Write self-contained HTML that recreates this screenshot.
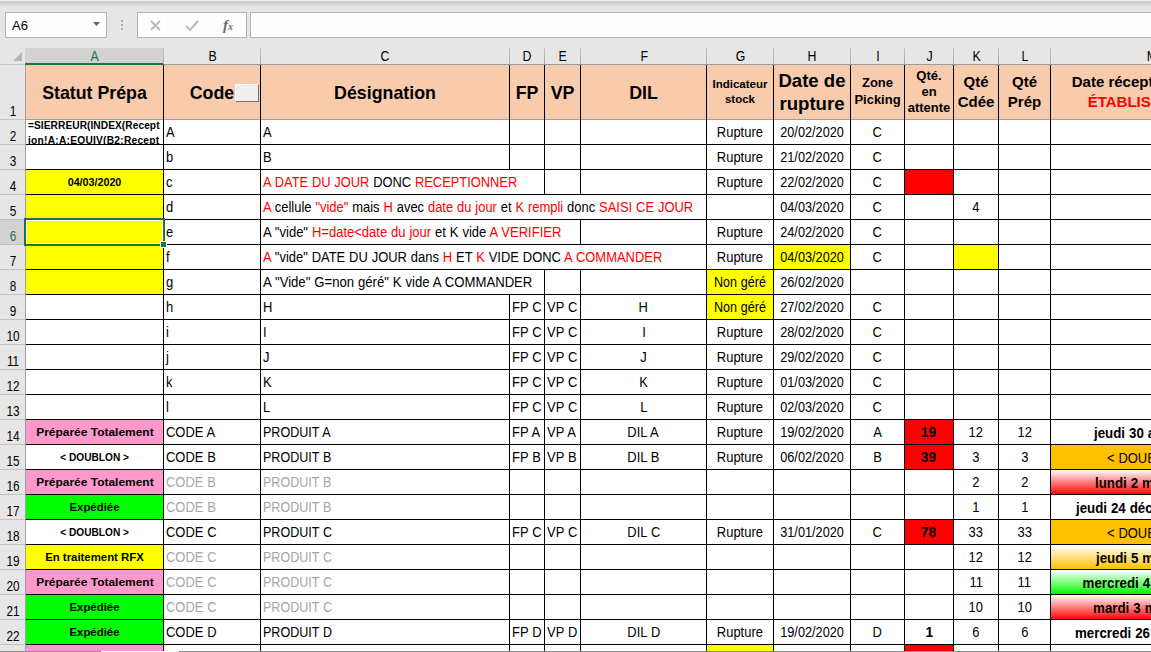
<!DOCTYPE html>
<html lang="fr"><head><meta charset="utf-8"><title>Classeur</title><style>
html,body{margin:0;padding:0;}
body{width:1151px;height:652px;overflow:hidden;background:#fff;position:relative;font-family:"Liberation Sans",sans-serif;color:#000;}
div{position:absolute;box-sizing:border-box;white-space:nowrap;}
.tb{left:0;top:0;width:1151px;height:64px;background:#e6e6e6;}
.strip{left:0;top:0;width:1151px;height:8px;background:linear-gradient(#f6f0f0 0,#f6f0f0 1px,#cecece 1px,#cecece 3px,#d6d6d6 3px,#d8d8d8 5px,#e0e0e0 5px,#e2e2e2 7px,#e6e6e6 8px);}
.box{background:#fefefe;border:1px solid #b4b4b4;top:12px;height:26px;}
.ch{top:47px;height:17px;font-size:14px;line-height:18px;text-align:center;color:#000;}
.vsep{top:48px;width:1px;height:16px;background:linear-gradient(#c4c4c4,#a8a8a8);}
.rh{left:0;width:25px;background:#e6e6e6;font-size:14px;text-align:center;border-bottom:1px solid #c2c4c2;}
.rh span{position:absolute;left:1px;right:0;bottom:-1px;line-height:17px;transform:scaleX(0.84);}
.c{overflow:hidden;font-size:14px;line-height:24px;}
.t{display:inline-block;transform:scaleX(0.925);word-spacing:0.3px;transform-origin:0 50%;}
.ctr .t{transform-origin:50% 50%;}
.hl{background:#000;height:1px;}
.vl{background:#000;width:1px;}
.ctr{text-align:center;}
.b{font-weight:bold;}
.r{color:#ff0000;}
.g{color:#a6a6a6;}
.hd{background:#f8cbad;font-weight:bold;text-align:center;display:flex;align-items:center;justify-content:center;white-space:normal;}
.st{font-size:11.4px;font-weight:bold;text-align:center;}
.st span{display:inline-block;}
</style></head><body>
<div class="tb" style=""></div>
<div class="strip" style=""></div>
<div class="box" style="left:5px;width:102px;font-size:13px;line-height:26px;padding-left:6px;">A6</div>
<svg style="position:absolute;left:93px;top:22px" width="8" height="5"><path d="M0 0h7l-3.5 4z" fill="#666"/></svg>
<svg style="position:absolute;left:121px;top:20px" width="3" height="12"><rect x="0" y="0" width="2" height="2" fill="#a8b4a4"/><rect x="0" y="4" width="2" height="2" fill="#a8b4a4"/><rect x="0" y="8" width="2" height="2" fill="#a8b4a4"/></svg>
<div class="box" style="left:137px;width:110px;"></div>
<svg style="position:absolute;left:150px;top:20px" width="12" height="12"><path d="M1 1l9 9M10 1l-9 9" stroke="#bababa" stroke-width="1.8" fill="none"/></svg>
<svg style="position:absolute;left:185px;top:20px" width="14" height="12"><path d="M1 6l4 4l8-9" stroke="#bababa" stroke-width="2.2" fill="none"/></svg>
<div class="" style="left:223px;top:15px;font-family:'Liberation Serif',serif;font-style:italic;font-weight:bold;font-size:15px;color:#6a6a6a;line-height:20px;">f<span style="font-size:10px">x</span></div>
<div class="box" style="left:250px;width:910px;"></div>
<div class="" style="left:0;top:47px;width:1151px;height:18px;background:#e6e6e6;"></div>
<div class="" style="left:25px;top:48px;width:139px;height:17px;background:#d2d2d2;border-bottom:2px solid #217346;"></div>
<svg style="position:absolute;left:13px;top:52px" width="9" height="9"><path d="M9 0v9h-9z" fill="#b4b4b4"/></svg>
<div class="ch" style="left:26px;width:138px;color:#217346;"><span style="display:inline-block;transform:scaleX(0.88)">A</span></div>
<div class="ch" style="left:164px;width:97px;color:#000;"><span style="display:inline-block;transform:scaleX(0.88)">B</span></div>
<div class="vsep" style="left:163px;"></div>
<div class="ch" style="left:261px;width:249px;color:#000;"><span style="display:inline-block;transform:scaleX(0.88)">C</span></div>
<div class="vsep" style="left:260px;"></div>
<div class="ch" style="left:510px;width:35px;color:#000;"><span style="display:inline-block;transform:scaleX(0.88)">D</span></div>
<div class="vsep" style="left:509px;"></div>
<div class="ch" style="left:545px;width:36px;color:#000;"><span style="display:inline-block;transform:scaleX(0.88)">E</span></div>
<div class="vsep" style="left:544px;"></div>
<div class="ch" style="left:581px;width:126px;color:#000;"><span style="display:inline-block;transform:scaleX(0.88)">F</span></div>
<div class="vsep" style="left:580px;"></div>
<div class="ch" style="left:707px;width:67px;color:#000;"><span style="display:inline-block;transform:scaleX(0.88)">G</span></div>
<div class="vsep" style="left:706px;"></div>
<div class="ch" style="left:774px;width:77px;color:#000;"><span style="display:inline-block;transform:scaleX(0.88)">H</span></div>
<div class="vsep" style="left:773px;"></div>
<div class="ch" style="left:851px;width:54px;color:#000;"><span style="display:inline-block;transform:scaleX(0.88)">I</span></div>
<div class="vsep" style="left:850px;"></div>
<div class="ch" style="left:905px;width:49px;color:#000;"><span style="display:inline-block;transform:scaleX(0.88)">J</span></div>
<div class="vsep" style="left:904px;"></div>
<div class="ch" style="left:954px;width:45px;color:#000;"><span style="display:inline-block;transform:scaleX(0.88)">K</span></div>
<div class="vsep" style="left:953px;"></div>
<div class="ch" style="left:999px;width:52px;color:#000;"><span style="display:inline-block;transform:scaleX(0.88)">L</span></div>
<div class="vsep" style="left:998px;"></div>
<div class="ch" style="left:1051px;width:202px;color:#000;"><span style="display:inline-block;transform:scaleX(0.88)">M</span></div>
<div class="vsep" style="left:1050px;"></div>
<div class="vsep" style="left:163px;"></div>
<div class="" style="left:164px;top:64px;width:990px;height:1px;background:#9c9c9c;"></div>
<div class="" style="left:0px;top:64px;width:25px;height:1px;background:#c8c8c8;"></div>
<div class="rh" style="top:65px;height:55px;"><span>1</span></div>
<div class="rh" style="top:120px;height:25px;"><span>2</span></div>
<div class="rh" style="top:145px;height:25px;"><span>3</span></div>
<div class="rh" style="top:170px;height:25px;"><span>4</span></div>
<div class="rh" style="top:195px;height:25px;"><span>5</span></div>
<div class="rh" style="top:220px;height:25px;background:#d2d2d2;color:#217346;"><span>6</span></div>
<div class="rh" style="top:245px;height:25px;"><span>7</span></div>
<div class="rh" style="top:270px;height:25px;"><span>8</span></div>
<div class="rh" style="top:295px;height:25px;"><span>9</span></div>
<div class="rh" style="top:320px;height:25px;"><span>10</span></div>
<div class="rh" style="top:345px;height:25px;"><span>11</span></div>
<div class="rh" style="top:370px;height:25px;"><span>12</span></div>
<div class="rh" style="top:395px;height:25px;"><span>13</span></div>
<div class="rh" style="top:420px;height:25px;"><span>14</span></div>
<div class="rh" style="top:445px;height:25px;"><span>15</span></div>
<div class="rh" style="top:470px;height:25px;"><span>16</span></div>
<div class="rh" style="top:495px;height:25px;"><span>17</span></div>
<div class="rh" style="top:520px;height:25px;"><span>18</span></div>
<div class="rh" style="top:545px;height:25px;"><span>19</span></div>
<div class="rh" style="top:570px;height:25px;"><span>20</span></div>
<div class="rh" style="top:595px;height:25px;"><span>21</span></div>
<div class="rh" style="top:620px;height:25px;"><span>22</span></div>
<div class="rh" style="top:645px;height:25px;"><span>23</span></div>
<div class="" style="left:25px;top:65px;width:1px;height:588px;background:#a0a0a0;"></div>
<div class="hd" style="left:26px;top:65px;width:137px;height:54px;font-size:17.8px;padding-top:2px;"><span>Statut Prépa</span></div>
<div class="hd" style="left:164px;top:65px;width:96px;height:54px;font-size:17.8px;padding-top:2px;"><span>Code</span></div>
<div class="hd" style="left:261px;top:65px;width:248px;height:54px;font-size:17.8px;padding-top:2px;"><span>Désignation</span></div>
<div class="hd" style="left:510px;top:65px;width:34px;height:54px;font-size:17.8px;padding-top:2px;"><span>FP</span></div>
<div class="hd" style="left:545px;top:65px;width:35px;height:54px;font-size:17.8px;padding-top:2px;"><span>VP</span></div>
<div class="hd" style="left:581px;top:65px;width:125px;height:54px;font-size:17.8px;padding-top:2px;"><span>DIL</span></div>
<div class="hd" style="left:707px;top:65px;width:66px;height:54px;font-size:11.5px;line-height:15px;"><span>Indicateur<br>stock</span></div>
<div class="hd" style="left:774px;top:65px;width:76px;height:54px;font-size:18.6px;line-height:23px;"><span>Date de<br>rupture</span></div>
<div class="hd" style="left:851px;top:65px;width:53px;height:54px;font-size:13px;line-height:17px;padding-bottom:2px;"><span>Zone<br>Picking</span></div>
<div class="hd" style="left:905px;top:65px;width:48px;height:54px;font-size:13px;line-height:16px;"><span>Qté.<br>en<br>attente</span></div>
<div class="hd" style="left:954px;top:65px;width:44px;height:54px;font-size:15px;line-height:20px;"><span>Qté<br>Cdée</span></div>
<div class="hd" style="left:999px;top:65px;width:51px;height:54px;font-size:15px;line-height:20px;"><span>Qté<br>Prép</span></div>
<div class="hd" style="left:1051px;top:65px;width:201px;height:54px;font-size:15px;line-height:20px;padding-right:2px;"><span>Date réception prévue<br><span class=r>ÉTABLISSEMENT</span></span></div>
<div class="" style="left:235px;top:84px;width:24px;height:18px;background:#efeff0;border:1px solid #fbfbfb;border-right-color:#8a6c68;border-bottom-color:#8a6c68;"></div>
<div class="c " style="left:26px;top:120px;width:137px;height:24px;font-size:10.2px;font-weight:bold;"><span style="position:absolute;left:2px;top:-2px;line-height:15px;white-space:normal;width:134px;word-break:break-all"><span style="letter-spacing:0.05px">=SIERREUR(INDEX(Recept</span><br><span style="letter-spacing:0.25px">ion!A:A;EQUIV(B2;Recept</span><br>ion</span></div>
<div class="c st" style="left:26px;top:170px;width:137px;height:24px;background:#ffff00;"><span style="transform:scaleX(0.94)">04/03/2020</span></div>
<div class="c " style="left:26px;top:195px;width:137px;height:24px;background:#ffff00;"></div>
<div class="c " style="left:26px;top:220px;width:137px;height:24px;background:#ffff00;"></div>
<div class="c " style="left:26px;top:245px;width:137px;height:24px;background:#ffff00;"></div>
<div class="c " style="left:26px;top:270px;width:137px;height:24px;background:#ffff00;"></div>
<div class="c st" style="left:26px;top:420px;width:137px;height:24px;background:#ff99cc;"><span style="transform:scaleX(1.05)">Préparée Totalement</span></div>
<div class="c st" style="left:26px;top:445px;width:137px;height:24px;"><span style="transform:scaleX(0.89)">&lt; DOUBLON &gt;</span></div>
<div class="c st" style="left:26px;top:470px;width:137px;height:24px;background:#ff99cc;"><span style="transform:scaleX(1.05)">Préparée Totalement</span></div>
<div class="c st" style="left:26px;top:495px;width:137px;height:24px;background:#00ff00;"><span style="transform:scaleX(1.0)">Expédiée</span></div>
<div class="c st" style="left:26px;top:520px;width:137px;height:24px;"><span style="transform:scaleX(0.89)">&lt; DOUBLON &gt;</span></div>
<div class="c st" style="left:26px;top:545px;width:137px;height:24px;background:#ffff00;"><span style="transform:scaleX(1.0)">En traitement RFX</span></div>
<div class="c st" style="left:26px;top:570px;width:137px;height:24px;background:#ff99cc;"><span style="transform:scaleX(1.05)">Préparée Totalement</span></div>
<div class="c st" style="left:26px;top:595px;width:137px;height:24px;background:#00ff00;"><span style="transform:scaleX(1.0)">Expédiée</span></div>
<div class="c st" style="left:26px;top:620px;width:137px;height:24px;background:#00ff00;"><span style="transform:scaleX(1.0)">Expédiée</span></div>
<div class="c st" style="left:26px;top:645px;width:137px;height:24px;background:#ff99cc;"></div>
<div class="c " style="left:164px;top:120px;width:96px;height:24px;padding-left:2px;"><span class="t">A</span></div>
<div class="c " style="left:164px;top:145px;width:96px;height:24px;padding-left:2px;"><span class="t">b</span></div>
<div class="c " style="left:164px;top:170px;width:96px;height:24px;padding-left:2px;"><span class="t">c</span></div>
<div class="c " style="left:164px;top:195px;width:96px;height:24px;padding-left:2px;"><span class="t">d</span></div>
<div class="c " style="left:164px;top:220px;width:96px;height:24px;padding-left:2px;"><span class="t">e</span></div>
<div class="c " style="left:164px;top:245px;width:96px;height:24px;padding-left:2px;"><span class="t">f</span></div>
<div class="c " style="left:164px;top:270px;width:96px;height:24px;padding-left:2px;"><span class="t">g</span></div>
<div class="c " style="left:164px;top:295px;width:96px;height:24px;padding-left:2px;"><span class="t">h</span></div>
<div class="c " style="left:164px;top:320px;width:96px;height:24px;padding-left:2px;"><span class="t">i</span></div>
<div class="c " style="left:164px;top:345px;width:96px;height:24px;padding-left:2px;"><span class="t">j</span></div>
<div class="c " style="left:164px;top:370px;width:96px;height:24px;padding-left:2px;"><span class="t">k</span></div>
<div class="c " style="left:164px;top:395px;width:96px;height:24px;padding-left:2px;"><span class="t">l</span></div>
<div class="c " style="left:261px;top:120px;width:248px;height:24px;padding-left:2px;"><span class="t">A</span></div>
<div class="c " style="left:261px;top:145px;width:248px;height:24px;padding-left:2px;"><span class="t">B</span></div>
<div class="c " style="left:261px;top:295px;width:248px;height:24px;padding-left:2px;"><span class="t">H</span></div>
<div class="c " style="left:261px;top:320px;width:248px;height:24px;padding-left:2px;"><span class="t">I</span></div>
<div class="c " style="left:261px;top:345px;width:248px;height:24px;padding-left:2px;"><span class="t">J</span></div>
<div class="c " style="left:261px;top:370px;width:248px;height:24px;padding-left:2px;"><span class="t">K</span></div>
<div class="c " style="left:261px;top:395px;width:248px;height:24px;padding-left:2px;"><span class="t">L</span></div>
<div class="c " style="left:261px;top:170px;width:283px;height:24px;padding-left:2px;"><span class="t" style="transform:scaleX(0.919)"><span class=r>A DATE DU JOUR</span> DONC <span class=r>RECEPTIONNER</span></span></div>
<div class="c " style="left:261px;top:195px;width:445px;height:24px;padding-left:2px;"><span class="t"><span class=r>A</span> cellule <span class=r>"vide"</span> mais <span class=r>H</span> avec <span class=r>date du jour</span> et <span class=r>K rempli</span> donc <span class=r>SAISI CE JOUR</span></span></div>
<div class="c " style="left:261px;top:220px;width:319px;height:24px;padding-left:2px;"><span class="t" style="transform:scaleX(0.93)">A "vide" <span class=r>H=date&lt;date du jour</span> et K vide <span class=r>A VERIFIER</span></span></div>
<div class="c " style="left:261px;top:245px;width:445px;height:24px;padding-left:2px;"><span class="t"><span class=r>A</span> "vide" DATE DU JOUR dans <span class=r>H</span> ET <span class=r>K</span> VIDE DONC <span class=r>A COMMANDER</span></span></div>
<div class="c " style="left:261px;top:270px;width:283px;height:24px;padding-left:2px;"><span class="t" style="transform:scaleX(0.938)">A "Vide" G=non géré" K vide A COMMANDER</span></div>
<div class="c " style="left:164px;top:420px;width:96px;height:24px;padding-left:2px;"><span class="t">CODE A</span></div>
<div class="c " style="left:261px;top:420px;width:248px;height:24px;padding-left:2px;"><span class="t" style="transform:scaleX(0.895)">PRODUIT A</span></div>
<div class="c " style="left:164px;top:445px;width:96px;height:24px;padding-left:2px;"><span class="t">CODE B</span></div>
<div class="c " style="left:261px;top:445px;width:248px;height:24px;padding-left:2px;"><span class="t" style="transform:scaleX(0.895)">PRODUIT B</span></div>
<div class="c g" style="left:164px;top:470px;width:96px;height:24px;padding-left:2px;"><span class="t">CODE B</span></div>
<div class="c g" style="left:261px;top:470px;width:248px;height:24px;padding-left:2px;"><span class="t" style="transform:scaleX(0.895)">PRODUIT B</span></div>
<div class="c g" style="left:164px;top:495px;width:96px;height:24px;padding-left:2px;"><span class="t">CODE B</span></div>
<div class="c g" style="left:261px;top:495px;width:248px;height:24px;padding-left:2px;"><span class="t" style="transform:scaleX(0.895)">PRODUIT B</span></div>
<div class="c " style="left:164px;top:520px;width:96px;height:24px;padding-left:2px;"><span class="t">CODE C</span></div>
<div class="c " style="left:261px;top:520px;width:248px;height:24px;padding-left:2px;"><span class="t" style="transform:scaleX(0.895)">PRODUIT C</span></div>
<div class="c g" style="left:164px;top:545px;width:96px;height:24px;padding-left:2px;"><span class="t">CODE C</span></div>
<div class="c g" style="left:261px;top:545px;width:248px;height:24px;padding-left:2px;"><span class="t" style="transform:scaleX(0.895)">PRODUIT C</span></div>
<div class="c g" style="left:164px;top:570px;width:96px;height:24px;padding-left:2px;"><span class="t">CODE C</span></div>
<div class="c g" style="left:261px;top:570px;width:248px;height:24px;padding-left:2px;"><span class="t" style="transform:scaleX(0.895)">PRODUIT C</span></div>
<div class="c g" style="left:164px;top:595px;width:96px;height:24px;padding-left:2px;"><span class="t">CODE C</span></div>
<div class="c g" style="left:261px;top:595px;width:248px;height:24px;padding-left:2px;"><span class="t" style="transform:scaleX(0.895)">PRODUIT C</span></div>
<div class="c " style="left:164px;top:620px;width:96px;height:24px;padding-left:2px;"><span class="t">CODE D</span></div>
<div class="c " style="left:261px;top:620px;width:248px;height:24px;padding-left:2px;"><span class="t" style="transform:scaleX(0.895)">PRODUIT D</span></div>
<div class="c " style="left:510px;top:295px;width:34px;height:24px;padding-left:2px;"><span class="t">FP C</span></div>
<div class="c " style="left:545px;top:295px;width:35px;height:24px;padding-left:2px;"><span class="t">VP C</span></div>
<div class="c ctr" style="left:581px;top:295px;width:125px;height:24px;"><span class="t">H</span></div>
<div class="c " style="left:510px;top:320px;width:34px;height:24px;padding-left:2px;"><span class="t">FP C</span></div>
<div class="c " style="left:545px;top:320px;width:35px;height:24px;padding-left:2px;"><span class="t">VP C</span></div>
<div class="c ctr" style="left:581px;top:320px;width:125px;height:24px;"><span class="t">I</span></div>
<div class="c " style="left:510px;top:345px;width:34px;height:24px;padding-left:2px;"><span class="t">FP C</span></div>
<div class="c " style="left:545px;top:345px;width:35px;height:24px;padding-left:2px;"><span class="t">VP C</span></div>
<div class="c ctr" style="left:581px;top:345px;width:125px;height:24px;"><span class="t">J</span></div>
<div class="c " style="left:510px;top:370px;width:34px;height:24px;padding-left:2px;"><span class="t">FP C</span></div>
<div class="c " style="left:545px;top:370px;width:35px;height:24px;padding-left:2px;"><span class="t">VP C</span></div>
<div class="c ctr" style="left:581px;top:370px;width:125px;height:24px;"><span class="t">K</span></div>
<div class="c " style="left:510px;top:395px;width:34px;height:24px;padding-left:2px;"><span class="t">FP C</span></div>
<div class="c " style="left:545px;top:395px;width:35px;height:24px;padding-left:2px;"><span class="t">VP C</span></div>
<div class="c ctr" style="left:581px;top:395px;width:125px;height:24px;"><span class="t">L</span></div>
<div class="c " style="left:510px;top:420px;width:34px;height:24px;padding-left:2px;"><span class="t">FP A</span></div>
<div class="c " style="left:545px;top:420px;width:35px;height:24px;padding-left:2px;"><span class="t">VP A</span></div>
<div class="c ctr" style="left:581px;top:420px;width:125px;height:24px;"><span class="t">DIL A</span></div>
<div class="c " style="left:510px;top:445px;width:34px;height:24px;padding-left:2px;"><span class="t">FP B</span></div>
<div class="c " style="left:545px;top:445px;width:35px;height:24px;padding-left:2px;"><span class="t">VP B</span></div>
<div class="c ctr" style="left:581px;top:445px;width:125px;height:24px;"><span class="t">DIL B</span></div>
<div class="c " style="left:510px;top:520px;width:34px;height:24px;padding-left:2px;"><span class="t">FP C</span></div>
<div class="c " style="left:545px;top:520px;width:35px;height:24px;padding-left:2px;"><span class="t">VP C</span></div>
<div class="c ctr" style="left:581px;top:520px;width:125px;height:24px;"><span class="t">DIL C</span></div>
<div class="c " style="left:510px;top:620px;width:34px;height:24px;padding-left:2px;"><span class="t">FP D</span></div>
<div class="c " style="left:545px;top:620px;width:35px;height:24px;padding-left:2px;"><span class="t">VP D</span></div>
<div class="c ctr" style="left:581px;top:620px;width:125px;height:24px;"><span class="t">DIL D</span></div>
<div class="c ctr" style="left:707px;top:120px;width:66px;height:24px;"><span class="t">Rupture</span></div>
<div class="c ctr" style="left:707px;top:145px;width:66px;height:24px;"><span class="t">Rupture</span></div>
<div class="c ctr" style="left:707px;top:170px;width:66px;height:24px;"><span class="t">Rupture</span></div>
<div class="c ctr" style="left:707px;top:220px;width:66px;height:24px;"><span class="t">Rupture</span></div>
<div class="c ctr" style="left:707px;top:245px;width:66px;height:24px;"><span class="t">Rupture</span></div>
<div class="c ctr" style="left:707px;top:320px;width:66px;height:24px;"><span class="t">Rupture</span></div>
<div class="c ctr" style="left:707px;top:345px;width:66px;height:24px;"><span class="t">Rupture</span></div>
<div class="c ctr" style="left:707px;top:370px;width:66px;height:24px;"><span class="t">Rupture</span></div>
<div class="c ctr" style="left:707px;top:395px;width:66px;height:24px;"><span class="t">Rupture</span></div>
<div class="c ctr" style="left:707px;top:420px;width:66px;height:24px;"><span class="t">Rupture</span></div>
<div class="c ctr" style="left:707px;top:445px;width:66px;height:24px;"><span class="t">Rupture</span></div>
<div class="c ctr" style="left:707px;top:520px;width:66px;height:24px;"><span class="t">Rupture</span></div>
<div class="c ctr" style="left:707px;top:620px;width:66px;height:24px;"><span class="t">Rupture</span></div>
<div class="c ctr" style="left:707px;top:270px;width:66px;height:24px;background:#ffff00;"><span class="t" style="transform:scaleX(0.895)">Non géré</span></div>
<div class="c ctr" style="left:707px;top:295px;width:66px;height:24px;background:#ffff00;"><span class="t" style="transform:scaleX(0.895)">Non géré</span></div>
<div class="c " style="left:707px;top:645px;width:66px;height:24px;background:#ffff00;"></div>
<div class="c ctr" style="left:774px;top:120px;width:76px;height:24px;"><span class="t" style="transform:scaleX(0.908)">20/02/2020</span></div>
<div class="c ctr" style="left:774px;top:145px;width:76px;height:24px;"><span class="t" style="transform:scaleX(0.908)">21/02/2020</span></div>
<div class="c ctr" style="left:774px;top:170px;width:76px;height:24px;"><span class="t" style="transform:scaleX(0.908)">22/02/2020</span></div>
<div class="c ctr" style="left:774px;top:195px;width:76px;height:24px;"><span class="t" style="transform:scaleX(0.908)">04/03/2020</span></div>
<div class="c ctr" style="left:774px;top:220px;width:76px;height:24px;"><span class="t" style="transform:scaleX(0.908)">24/02/2020</span></div>
<div class="c ctr" style="left:774px;top:245px;width:76px;height:24px;background:#ffff00;"><span class="t" style="transform:scaleX(0.908)">04/03/2020</span></div>
<div class="c ctr" style="left:774px;top:270px;width:76px;height:24px;"><span class="t" style="transform:scaleX(0.908)">26/02/2020</span></div>
<div class="c ctr" style="left:774px;top:295px;width:76px;height:24px;"><span class="t" style="transform:scaleX(0.908)">27/02/2020</span></div>
<div class="c ctr" style="left:774px;top:320px;width:76px;height:24px;"><span class="t" style="transform:scaleX(0.908)">28/02/2020</span></div>
<div class="c ctr" style="left:774px;top:345px;width:76px;height:24px;"><span class="t" style="transform:scaleX(0.908)">29/02/2020</span></div>
<div class="c ctr" style="left:774px;top:370px;width:76px;height:24px;"><span class="t" style="transform:scaleX(0.908)">01/03/2020</span></div>
<div class="c ctr" style="left:774px;top:395px;width:76px;height:24px;"><span class="t" style="transform:scaleX(0.908)">02/03/2020</span></div>
<div class="c ctr" style="left:774px;top:420px;width:76px;height:24px;"><span class="t" style="transform:scaleX(0.908)">19/02/2020</span></div>
<div class="c ctr" style="left:774px;top:445px;width:76px;height:24px;"><span class="t" style="transform:scaleX(0.908)">06/02/2020</span></div>
<div class="c ctr" style="left:774px;top:520px;width:76px;height:24px;"><span class="t" style="transform:scaleX(0.908)">31/01/2020</span></div>
<div class="c ctr" style="left:774px;top:620px;width:76px;height:24px;"><span class="t" style="transform:scaleX(0.908)">19/02/2020</span></div>
<div class="c ctr" style="left:851px;top:120px;width:53px;height:24px;"><span class="t">C</span></div>
<div class="c ctr" style="left:851px;top:145px;width:53px;height:24px;"><span class="t">C</span></div>
<div class="c ctr" style="left:851px;top:170px;width:53px;height:24px;"><span class="t">C</span></div>
<div class="c ctr" style="left:851px;top:195px;width:53px;height:24px;"><span class="t">C</span></div>
<div class="c ctr" style="left:851px;top:220px;width:53px;height:24px;"><span class="t">C</span></div>
<div class="c ctr" style="left:851px;top:245px;width:53px;height:24px;"><span class="t">C</span></div>
<div class="c ctr" style="left:851px;top:295px;width:53px;height:24px;"><span class="t">C</span></div>
<div class="c ctr" style="left:851px;top:320px;width:53px;height:24px;"><span class="t">C</span></div>
<div class="c ctr" style="left:851px;top:345px;width:53px;height:24px;"><span class="t">C</span></div>
<div class="c ctr" style="left:851px;top:370px;width:53px;height:24px;"><span class="t">C</span></div>
<div class="c ctr" style="left:851px;top:395px;width:53px;height:24px;"><span class="t">C</span></div>
<div class="c ctr" style="left:851px;top:520px;width:53px;height:24px;"><span class="t">C</span></div>
<div class="c ctr" style="left:851px;top:420px;width:53px;height:24px;"><span class="t">A</span></div>
<div class="c ctr" style="left:851px;top:445px;width:53px;height:24px;"><span class="t">B</span></div>
<div class="c ctr" style="left:851px;top:620px;width:53px;height:24px;"><span class="t">D</span></div>
<div class="c " style="left:905px;top:170px;width:48px;height:24px;background:#ff0000;"></div>
<div class="c ctr b" style="left:905px;top:420px;width:48px;height:24px;background:#ff0000;font-size:15.4px;line-height:23px;"><span class="t" style="transform:scaleX(0.9)">19</span></div>
<div class="c ctr b" style="left:905px;top:445px;width:48px;height:24px;background:#ff0000;font-size:15.4px;line-height:23px;"><span class="t" style="transform:scaleX(0.9)">39</span></div>
<div class="c ctr b" style="left:905px;top:520px;width:48px;height:24px;background:#ff0000;font-size:15.4px;line-height:23px;"><span class="t" style="transform:scaleX(0.9)">78</span></div>
<div class="c ctr b" style="left:905px;top:620px;width:48px;height:24px;font-size:15.4px;line-height:23px;"><span class="t" style="transform:scaleX(0.9)">1</span></div>
<div class="c " style="left:905px;top:645px;width:48px;height:24px;background:#ff0000;"></div>
<div class="c ctr" style="left:954px;top:195px;width:44px;height:24px;"><span class="t">4</span></div>
<div class="c " style="left:954px;top:245px;width:44px;height:24px;background:#ffff00;"></div>
<div class="c ctr" style="left:954px;top:420px;width:44px;height:24px;"><span class="t">12</span></div>
<div class="c ctr" style="left:999px;top:420px;width:51px;height:24px;"><span class="t">12</span></div>
<div class="c ctr" style="left:954px;top:445px;width:44px;height:24px;"><span class="t">3</span></div>
<div class="c ctr" style="left:999px;top:445px;width:51px;height:24px;"><span class="t">3</span></div>
<div class="c ctr" style="left:954px;top:470px;width:44px;height:24px;"><span class="t">2</span></div>
<div class="c ctr" style="left:999px;top:470px;width:51px;height:24px;"><span class="t">2</span></div>
<div class="c ctr" style="left:954px;top:495px;width:44px;height:24px;"><span class="t">1</span></div>
<div class="c ctr" style="left:999px;top:495px;width:51px;height:24px;"><span class="t">1</span></div>
<div class="c ctr" style="left:954px;top:520px;width:44px;height:24px;"><span class="t">33</span></div>
<div class="c ctr" style="left:999px;top:520px;width:51px;height:24px;"><span class="t">33</span></div>
<div class="c ctr" style="left:954px;top:545px;width:44px;height:24px;"><span class="t">12</span></div>
<div class="c ctr" style="left:999px;top:545px;width:51px;height:24px;"><span class="t">12</span></div>
<div class="c ctr" style="left:954px;top:570px;width:44px;height:24px;"><span class="t">11</span></div>
<div class="c ctr" style="left:999px;top:570px;width:51px;height:24px;"><span class="t">11</span></div>
<div class="c ctr" style="left:954px;top:595px;width:44px;height:24px;"><span class="t">10</span></div>
<div class="c ctr" style="left:999px;top:595px;width:51px;height:24px;"><span class="t">10</span></div>
<div class="c ctr" style="left:954px;top:620px;width:44px;height:24px;"><span class="t">6</span></div>
<div class="c ctr" style="left:999px;top:620px;width:51px;height:24px;"><span class="t">6</span></div>
<div class="c ctr b" style="left:1051px;top:420px;width:201px;height:24px;line-height:26px;"><span class="t" style="transform:scaleX(0.95)">jeudi 30 avril 2020</span></div>
<div class="c " style="left:1051px;top:445px;width:201px;height:24px;background:#ffc000;padding-left:56px;line-height:26px;"><span class="t" style="transform-origin:0 50%">&lt; DOUBLON &gt;</span></div>
<div class="c ctr b" style="left:1051px;top:470px;width:201px;height:24px;background:linear-gradient(#ffffff 0%,#ff8080 50%,#ff0808 100%);line-height:26px;"><span class="t" style="transform:scaleX(0.95)">lundi 2 mars 2020</span></div>
<div class="c ctr b" style="left:1051px;top:495px;width:201px;height:24px;line-height:26px;"><span class="t" style="transform:scaleX(0.95)">jeudi 24 décembre 2020</span></div>
<div class="c " style="left:1051px;top:520px;width:201px;height:24px;background:#ffc000;padding-left:56px;line-height:26px;"><span class="t" style="transform-origin:0 50%">&lt; DOUBLON &gt;</span></div>
<div class="c ctr b" style="left:1051px;top:545px;width:201px;height:24px;background:linear-gradient(#ffffff 0%,#ffe080 50%,#ffc000 100%);line-height:26px;"><span class="t" style="transform:scaleX(0.95)">jeudi 5 mars 2020</span></div>
<div class="c ctr b" style="left:1051px;top:570px;width:201px;height:24px;background:linear-gradient(#ffffff 0%,#80ff80 50%,#00f800 100%);line-height:26px;"><span class="t" style="transform:scaleX(0.95)">mercredi 4 mars 2020</span></div>
<div class="c ctr b" style="left:1051px;top:595px;width:201px;height:24px;background:linear-gradient(#ffffff 0%,#ff8080 50%,#ff0808 100%);line-height:26px;"><span class="t" style="transform:scaleX(0.95)">mardi 3 mars 2020</span></div>
<div class="c ctr b" style="left:1051px;top:620px;width:201px;height:24px;line-height:26px;"><span class="t" style="transform:scaleX(0.95)">mercredi 26 février 2020</span></div>
<div class="hl" style="left:26px;top:119px;width:1130px;background:#9e9e9e;"></div>
<div class="hl" style="left:26px;top:144px;width:1130px;"></div>
<div class="hl" style="left:26px;top:169px;width:1130px;"></div>
<div class="hl" style="left:26px;top:194px;width:1130px;"></div>
<div class="hl" style="left:26px;top:219px;width:1130px;"></div>
<div class="hl" style="left:26px;top:244px;width:1130px;"></div>
<div class="hl" style="left:26px;top:269px;width:1130px;"></div>
<div class="hl" style="left:26px;top:294px;width:1130px;"></div>
<div class="hl" style="left:26px;top:319px;width:1130px;"></div>
<div class="hl" style="left:26px;top:344px;width:1130px;"></div>
<div class="hl" style="left:26px;top:369px;width:1130px;"></div>
<div class="hl" style="left:26px;top:394px;width:1130px;"></div>
<div class="hl" style="left:26px;top:419px;width:1130px;"></div>
<div class="hl" style="left:26px;top:444px;width:1130px;"></div>
<div class="hl" style="left:26px;top:469px;width:1130px;"></div>
<div class="hl" style="left:26px;top:494px;width:1130px;"></div>
<div class="hl" style="left:26px;top:519px;width:1130px;"></div>
<div class="hl" style="left:26px;top:544px;width:1130px;"></div>
<div class="hl" style="left:26px;top:569px;width:1130px;"></div>
<div class="hl" style="left:26px;top:594px;width:1130px;"></div>
<div class="hl" style="left:26px;top:619px;width:1130px;"></div>
<div class="hl" style="left:26px;top:644px;width:1130px;"></div>
<div class="hl" style="left:26px;top:669px;width:1130px;"></div>
<div class="vl" style="left:163px;top:65px;height:55px;"></div>
<div class="vl" style="left:260px;top:65px;height:55px;"></div>
<div class="vl" style="left:509px;top:65px;height:55px;"></div>
<div class="vl" style="left:544px;top:65px;height:55px;"></div>
<div class="vl" style="left:580px;top:65px;height:55px;"></div>
<div class="vl" style="left:706px;top:65px;height:55px;"></div>
<div class="vl" style="left:773px;top:65px;height:55px;"></div>
<div class="vl" style="left:850px;top:65px;height:55px;"></div>
<div class="vl" style="left:904px;top:65px;height:55px;"></div>
<div class="vl" style="left:953px;top:65px;height:55px;"></div>
<div class="vl" style="left:998px;top:65px;height:55px;"></div>
<div class="vl" style="left:1050px;top:65px;height:55px;"></div>
<div class="vl" style="left:163px;top:119px;height:26px;"></div>
<div class="vl" style="left:260px;top:119px;height:26px;"></div>
<div class="vl" style="left:509px;top:119px;height:26px;"></div>
<div class="vl" style="left:544px;top:119px;height:26px;"></div>
<div class="vl" style="left:580px;top:119px;height:26px;"></div>
<div class="vl" style="left:706px;top:119px;height:26px;"></div>
<div class="vl" style="left:773px;top:119px;height:26px;"></div>
<div class="vl" style="left:850px;top:119px;height:26px;"></div>
<div class="vl" style="left:904px;top:119px;height:26px;"></div>
<div class="vl" style="left:953px;top:119px;height:26px;"></div>
<div class="vl" style="left:998px;top:119px;height:26px;"></div>
<div class="vl" style="left:1050px;top:119px;height:26px;"></div>
<div class="vl" style="left:163px;top:144px;height:26px;"></div>
<div class="vl" style="left:260px;top:144px;height:26px;"></div>
<div class="vl" style="left:509px;top:144px;height:26px;"></div>
<div class="vl" style="left:544px;top:144px;height:26px;"></div>
<div class="vl" style="left:580px;top:144px;height:26px;"></div>
<div class="vl" style="left:706px;top:144px;height:26px;"></div>
<div class="vl" style="left:773px;top:144px;height:26px;"></div>
<div class="vl" style="left:850px;top:144px;height:26px;"></div>
<div class="vl" style="left:904px;top:144px;height:26px;"></div>
<div class="vl" style="left:953px;top:144px;height:26px;"></div>
<div class="vl" style="left:998px;top:144px;height:26px;"></div>
<div class="vl" style="left:1050px;top:144px;height:26px;"></div>
<div class="vl" style="left:163px;top:169px;height:26px;"></div>
<div class="vl" style="left:260px;top:169px;height:26px;"></div>
<div class="vl" style="left:544px;top:169px;height:26px;"></div>
<div class="vl" style="left:580px;top:169px;height:26px;"></div>
<div class="vl" style="left:706px;top:169px;height:26px;"></div>
<div class="vl" style="left:773px;top:169px;height:26px;"></div>
<div class="vl" style="left:850px;top:169px;height:26px;"></div>
<div class="vl" style="left:904px;top:169px;height:26px;"></div>
<div class="vl" style="left:953px;top:169px;height:26px;"></div>
<div class="vl" style="left:998px;top:169px;height:26px;"></div>
<div class="vl" style="left:1050px;top:169px;height:26px;"></div>
<div class="vl" style="left:163px;top:194px;height:26px;"></div>
<div class="vl" style="left:260px;top:194px;height:26px;"></div>
<div class="vl" style="left:706px;top:194px;height:26px;"></div>
<div class="vl" style="left:773px;top:194px;height:26px;"></div>
<div class="vl" style="left:850px;top:194px;height:26px;"></div>
<div class="vl" style="left:904px;top:194px;height:26px;"></div>
<div class="vl" style="left:953px;top:194px;height:26px;"></div>
<div class="vl" style="left:998px;top:194px;height:26px;"></div>
<div class="vl" style="left:1050px;top:194px;height:26px;"></div>
<div class="vl" style="left:163px;top:219px;height:26px;"></div>
<div class="vl" style="left:260px;top:219px;height:26px;"></div>
<div class="vl" style="left:580px;top:219px;height:26px;"></div>
<div class="vl" style="left:706px;top:219px;height:26px;"></div>
<div class="vl" style="left:773px;top:219px;height:26px;"></div>
<div class="vl" style="left:850px;top:219px;height:26px;"></div>
<div class="vl" style="left:904px;top:219px;height:26px;"></div>
<div class="vl" style="left:953px;top:219px;height:26px;"></div>
<div class="vl" style="left:998px;top:219px;height:26px;"></div>
<div class="vl" style="left:1050px;top:219px;height:26px;"></div>
<div class="vl" style="left:163px;top:244px;height:26px;"></div>
<div class="vl" style="left:260px;top:244px;height:26px;"></div>
<div class="vl" style="left:706px;top:244px;height:26px;"></div>
<div class="vl" style="left:773px;top:244px;height:26px;"></div>
<div class="vl" style="left:850px;top:244px;height:26px;"></div>
<div class="vl" style="left:904px;top:244px;height:26px;"></div>
<div class="vl" style="left:953px;top:244px;height:26px;"></div>
<div class="vl" style="left:998px;top:244px;height:26px;"></div>
<div class="vl" style="left:1050px;top:244px;height:26px;"></div>
<div class="vl" style="left:163px;top:269px;height:26px;"></div>
<div class="vl" style="left:260px;top:269px;height:26px;"></div>
<div class="vl" style="left:544px;top:269px;height:26px;"></div>
<div class="vl" style="left:580px;top:269px;height:26px;"></div>
<div class="vl" style="left:706px;top:269px;height:26px;"></div>
<div class="vl" style="left:773px;top:269px;height:26px;"></div>
<div class="vl" style="left:850px;top:269px;height:26px;"></div>
<div class="vl" style="left:904px;top:269px;height:26px;"></div>
<div class="vl" style="left:953px;top:269px;height:26px;"></div>
<div class="vl" style="left:998px;top:269px;height:26px;"></div>
<div class="vl" style="left:1050px;top:269px;height:26px;"></div>
<div class="vl" style="left:163px;top:294px;height:26px;"></div>
<div class="vl" style="left:260px;top:294px;height:26px;"></div>
<div class="vl" style="left:509px;top:294px;height:26px;"></div>
<div class="vl" style="left:544px;top:294px;height:26px;"></div>
<div class="vl" style="left:580px;top:294px;height:26px;"></div>
<div class="vl" style="left:706px;top:294px;height:26px;"></div>
<div class="vl" style="left:773px;top:294px;height:26px;"></div>
<div class="vl" style="left:850px;top:294px;height:26px;"></div>
<div class="vl" style="left:904px;top:294px;height:26px;"></div>
<div class="vl" style="left:953px;top:294px;height:26px;"></div>
<div class="vl" style="left:998px;top:294px;height:26px;"></div>
<div class="vl" style="left:1050px;top:294px;height:26px;"></div>
<div class="vl" style="left:163px;top:319px;height:26px;"></div>
<div class="vl" style="left:260px;top:319px;height:26px;"></div>
<div class="vl" style="left:509px;top:319px;height:26px;"></div>
<div class="vl" style="left:544px;top:319px;height:26px;"></div>
<div class="vl" style="left:580px;top:319px;height:26px;"></div>
<div class="vl" style="left:706px;top:319px;height:26px;"></div>
<div class="vl" style="left:773px;top:319px;height:26px;"></div>
<div class="vl" style="left:850px;top:319px;height:26px;"></div>
<div class="vl" style="left:904px;top:319px;height:26px;"></div>
<div class="vl" style="left:953px;top:319px;height:26px;"></div>
<div class="vl" style="left:998px;top:319px;height:26px;"></div>
<div class="vl" style="left:1050px;top:319px;height:26px;"></div>
<div class="vl" style="left:163px;top:344px;height:26px;"></div>
<div class="vl" style="left:260px;top:344px;height:26px;"></div>
<div class="vl" style="left:509px;top:344px;height:26px;"></div>
<div class="vl" style="left:544px;top:344px;height:26px;"></div>
<div class="vl" style="left:580px;top:344px;height:26px;"></div>
<div class="vl" style="left:706px;top:344px;height:26px;"></div>
<div class="vl" style="left:773px;top:344px;height:26px;"></div>
<div class="vl" style="left:850px;top:344px;height:26px;"></div>
<div class="vl" style="left:904px;top:344px;height:26px;"></div>
<div class="vl" style="left:953px;top:344px;height:26px;"></div>
<div class="vl" style="left:998px;top:344px;height:26px;"></div>
<div class="vl" style="left:1050px;top:344px;height:26px;"></div>
<div class="vl" style="left:163px;top:369px;height:26px;"></div>
<div class="vl" style="left:260px;top:369px;height:26px;"></div>
<div class="vl" style="left:509px;top:369px;height:26px;"></div>
<div class="vl" style="left:544px;top:369px;height:26px;"></div>
<div class="vl" style="left:580px;top:369px;height:26px;"></div>
<div class="vl" style="left:706px;top:369px;height:26px;"></div>
<div class="vl" style="left:773px;top:369px;height:26px;"></div>
<div class="vl" style="left:850px;top:369px;height:26px;"></div>
<div class="vl" style="left:904px;top:369px;height:26px;"></div>
<div class="vl" style="left:953px;top:369px;height:26px;"></div>
<div class="vl" style="left:998px;top:369px;height:26px;"></div>
<div class="vl" style="left:1050px;top:369px;height:26px;"></div>
<div class="vl" style="left:163px;top:394px;height:26px;"></div>
<div class="vl" style="left:260px;top:394px;height:26px;"></div>
<div class="vl" style="left:509px;top:394px;height:26px;"></div>
<div class="vl" style="left:544px;top:394px;height:26px;"></div>
<div class="vl" style="left:580px;top:394px;height:26px;"></div>
<div class="vl" style="left:706px;top:394px;height:26px;"></div>
<div class="vl" style="left:773px;top:394px;height:26px;"></div>
<div class="vl" style="left:850px;top:394px;height:26px;"></div>
<div class="vl" style="left:904px;top:394px;height:26px;"></div>
<div class="vl" style="left:953px;top:394px;height:26px;"></div>
<div class="vl" style="left:998px;top:394px;height:26px;"></div>
<div class="vl" style="left:1050px;top:394px;height:26px;"></div>
<div class="vl" style="left:163px;top:419px;height:26px;"></div>
<div class="vl" style="left:260px;top:419px;height:26px;"></div>
<div class="vl" style="left:509px;top:419px;height:26px;"></div>
<div class="vl" style="left:544px;top:419px;height:26px;"></div>
<div class="vl" style="left:580px;top:419px;height:26px;"></div>
<div class="vl" style="left:706px;top:419px;height:26px;"></div>
<div class="vl" style="left:773px;top:419px;height:26px;"></div>
<div class="vl" style="left:850px;top:419px;height:26px;"></div>
<div class="vl" style="left:904px;top:419px;height:26px;"></div>
<div class="vl" style="left:953px;top:419px;height:26px;"></div>
<div class="vl" style="left:998px;top:419px;height:26px;"></div>
<div class="vl" style="left:1050px;top:419px;height:26px;"></div>
<div class="vl" style="left:163px;top:444px;height:26px;"></div>
<div class="vl" style="left:260px;top:444px;height:26px;"></div>
<div class="vl" style="left:509px;top:444px;height:26px;"></div>
<div class="vl" style="left:544px;top:444px;height:26px;"></div>
<div class="vl" style="left:580px;top:444px;height:26px;"></div>
<div class="vl" style="left:706px;top:444px;height:26px;"></div>
<div class="vl" style="left:773px;top:444px;height:26px;"></div>
<div class="vl" style="left:850px;top:444px;height:26px;"></div>
<div class="vl" style="left:904px;top:444px;height:26px;"></div>
<div class="vl" style="left:953px;top:444px;height:26px;"></div>
<div class="vl" style="left:998px;top:444px;height:26px;"></div>
<div class="vl" style="left:1050px;top:444px;height:26px;"></div>
<div class="vl" style="left:163px;top:469px;height:26px;"></div>
<div class="vl" style="left:260px;top:469px;height:26px;"></div>
<div class="vl" style="left:509px;top:469px;height:26px;"></div>
<div class="vl" style="left:544px;top:469px;height:26px;"></div>
<div class="vl" style="left:580px;top:469px;height:26px;"></div>
<div class="vl" style="left:706px;top:469px;height:26px;"></div>
<div class="vl" style="left:773px;top:469px;height:26px;"></div>
<div class="vl" style="left:850px;top:469px;height:26px;"></div>
<div class="vl" style="left:904px;top:469px;height:26px;"></div>
<div class="vl" style="left:953px;top:469px;height:26px;"></div>
<div class="vl" style="left:998px;top:469px;height:26px;"></div>
<div class="vl" style="left:1050px;top:469px;height:26px;"></div>
<div class="vl" style="left:163px;top:494px;height:26px;"></div>
<div class="vl" style="left:260px;top:494px;height:26px;"></div>
<div class="vl" style="left:509px;top:494px;height:26px;"></div>
<div class="vl" style="left:544px;top:494px;height:26px;"></div>
<div class="vl" style="left:580px;top:494px;height:26px;"></div>
<div class="vl" style="left:706px;top:494px;height:26px;"></div>
<div class="vl" style="left:773px;top:494px;height:26px;"></div>
<div class="vl" style="left:850px;top:494px;height:26px;"></div>
<div class="vl" style="left:904px;top:494px;height:26px;"></div>
<div class="vl" style="left:953px;top:494px;height:26px;"></div>
<div class="vl" style="left:998px;top:494px;height:26px;"></div>
<div class="vl" style="left:1050px;top:494px;height:26px;"></div>
<div class="vl" style="left:163px;top:519px;height:26px;"></div>
<div class="vl" style="left:260px;top:519px;height:26px;"></div>
<div class="vl" style="left:509px;top:519px;height:26px;"></div>
<div class="vl" style="left:544px;top:519px;height:26px;"></div>
<div class="vl" style="left:580px;top:519px;height:26px;"></div>
<div class="vl" style="left:706px;top:519px;height:26px;"></div>
<div class="vl" style="left:773px;top:519px;height:26px;"></div>
<div class="vl" style="left:850px;top:519px;height:26px;"></div>
<div class="vl" style="left:904px;top:519px;height:26px;"></div>
<div class="vl" style="left:953px;top:519px;height:26px;"></div>
<div class="vl" style="left:998px;top:519px;height:26px;"></div>
<div class="vl" style="left:1050px;top:519px;height:26px;"></div>
<div class="vl" style="left:163px;top:544px;height:26px;"></div>
<div class="vl" style="left:260px;top:544px;height:26px;"></div>
<div class="vl" style="left:509px;top:544px;height:26px;"></div>
<div class="vl" style="left:544px;top:544px;height:26px;"></div>
<div class="vl" style="left:580px;top:544px;height:26px;"></div>
<div class="vl" style="left:706px;top:544px;height:26px;"></div>
<div class="vl" style="left:773px;top:544px;height:26px;"></div>
<div class="vl" style="left:850px;top:544px;height:26px;"></div>
<div class="vl" style="left:904px;top:544px;height:26px;"></div>
<div class="vl" style="left:953px;top:544px;height:26px;"></div>
<div class="vl" style="left:998px;top:544px;height:26px;"></div>
<div class="vl" style="left:1050px;top:544px;height:26px;"></div>
<div class="vl" style="left:163px;top:569px;height:26px;"></div>
<div class="vl" style="left:260px;top:569px;height:26px;"></div>
<div class="vl" style="left:509px;top:569px;height:26px;"></div>
<div class="vl" style="left:544px;top:569px;height:26px;"></div>
<div class="vl" style="left:580px;top:569px;height:26px;"></div>
<div class="vl" style="left:706px;top:569px;height:26px;"></div>
<div class="vl" style="left:773px;top:569px;height:26px;"></div>
<div class="vl" style="left:850px;top:569px;height:26px;"></div>
<div class="vl" style="left:904px;top:569px;height:26px;"></div>
<div class="vl" style="left:953px;top:569px;height:26px;"></div>
<div class="vl" style="left:998px;top:569px;height:26px;"></div>
<div class="vl" style="left:1050px;top:569px;height:26px;"></div>
<div class="vl" style="left:163px;top:594px;height:26px;"></div>
<div class="vl" style="left:260px;top:594px;height:26px;"></div>
<div class="vl" style="left:509px;top:594px;height:26px;"></div>
<div class="vl" style="left:544px;top:594px;height:26px;"></div>
<div class="vl" style="left:580px;top:594px;height:26px;"></div>
<div class="vl" style="left:706px;top:594px;height:26px;"></div>
<div class="vl" style="left:773px;top:594px;height:26px;"></div>
<div class="vl" style="left:850px;top:594px;height:26px;"></div>
<div class="vl" style="left:904px;top:594px;height:26px;"></div>
<div class="vl" style="left:953px;top:594px;height:26px;"></div>
<div class="vl" style="left:998px;top:594px;height:26px;"></div>
<div class="vl" style="left:1050px;top:594px;height:26px;"></div>
<div class="vl" style="left:163px;top:619px;height:26px;"></div>
<div class="vl" style="left:260px;top:619px;height:26px;"></div>
<div class="vl" style="left:509px;top:619px;height:26px;"></div>
<div class="vl" style="left:544px;top:619px;height:26px;"></div>
<div class="vl" style="left:580px;top:619px;height:26px;"></div>
<div class="vl" style="left:706px;top:619px;height:26px;"></div>
<div class="vl" style="left:773px;top:619px;height:26px;"></div>
<div class="vl" style="left:850px;top:619px;height:26px;"></div>
<div class="vl" style="left:904px;top:619px;height:26px;"></div>
<div class="vl" style="left:953px;top:619px;height:26px;"></div>
<div class="vl" style="left:998px;top:619px;height:26px;"></div>
<div class="vl" style="left:1050px;top:619px;height:26px;"></div>
<div class="vl" style="left:163px;top:644px;height:26px;"></div>
<div class="vl" style="left:260px;top:644px;height:26px;"></div>
<div class="vl" style="left:509px;top:644px;height:26px;"></div>
<div class="vl" style="left:544px;top:644px;height:26px;"></div>
<div class="vl" style="left:580px;top:644px;height:26px;"></div>
<div class="vl" style="left:706px;top:644px;height:26px;"></div>
<div class="vl" style="left:773px;top:644px;height:26px;"></div>
<div class="vl" style="left:850px;top:644px;height:26px;"></div>
<div class="vl" style="left:904px;top:644px;height:26px;"></div>
<div class="vl" style="left:953px;top:644px;height:26px;"></div>
<div class="vl" style="left:998px;top:644px;height:26px;"></div>
<div class="vl" style="left:1050px;top:644px;height:26px;"></div>
<div class="" style="left:24px;top:218px;width:141px;height:28px;border:2px solid #217346;box-shadow:inset 0 0 0 1px #fff;"></div>
<div class="" style="left:160px;top:241px;width:7px;height:7px;background:#217346;border:1px solid #fff;"></div>
<div class="" style="left:0;top:651px;width:1151px;height:1px;background:#8e8e8e;"></div>
<div class="" style="left:101px;top:651px;width:78px;height:1px;background:#fff;"></div>
</body></html>
